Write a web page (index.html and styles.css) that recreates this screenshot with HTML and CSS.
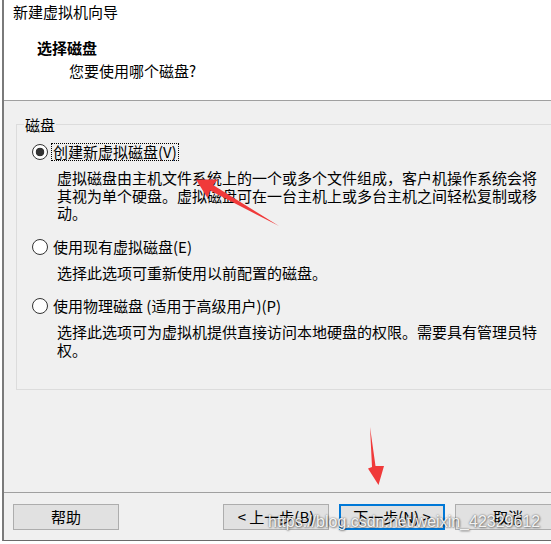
FILE: index.html
```html
<!DOCTYPE html>
<html lang="zh-CN">
<head>
    <meta charset="UTF-8">
    <title>新建虚拟机向导</title>
    <link rel="stylesheet" href="styles.css">
</head>
<body>
    <div class="window">
        <div class="header">
            <div class="caption">新建虚拟机向导</div>
            <div class="step-title">选择磁盘</div>
            <div class="step-desc">您要使用哪个磁盘?</div>
        </div>

        <div class="content">
            <fieldset class="group">
                <legend>磁盘</legend>

                <div class="option">
                    <label class="option-row">
                        <input type="radio" name="disk" checked>
                        <span class="option-label focused">创建新虚拟磁盘(V)</span>
                    </label>
                    <p class="option-desc">虚拟磁盘由主机文件系统上的一个或多个文件组成，客户机操作系统会将其视为单个硬盘。虚拟磁盘可在一台主机上或多台主机之间轻松复制或移动。</p>
                </div>

                <div class="option">
                    <label class="option-row">
                        <input type="radio" name="disk">
                        <span class="option-label">使用现有虚拟磁盘(E)</span>
                    </label>
                    <p class="option-desc">选择此选项可重新使用以前配置的磁盘。</p>
                </div>

                <div class="option">
                    <label class="option-row">
                        <input type="radio" name="disk">
                        <span class="option-label">使用物理磁盘 (适用于高级用户)(P)</span>
                    </label>
                    <p class="option-desc">选择此选项可为虚拟机提供直接访问本地硬盘的权限。需要具有管理员特权。</p>
                </div>
            </fieldset>
        </div>

        <div class="footer">
            <button class="btn">帮助</button>
            <div class="nav">
                <button class="btn">&lt; 上一步(B)</button>
                <button class="btn default">下一步(N) &gt;</button>
                <button class="btn">取消</button>
            </div>
        </div>
    </div>

    <!-- red annotation arrows -->
    <svg class="marks" width="551" height="544" viewBox="0 0 551 544">
        <polygon points="279,226 213,185 218,179.5 196,179.5 207.5,198 210,190.5" fill="#f03a3a"/>
        <polygon points="370,427 375.5,466 384,466 378.5,485 368,468.5 372,467" fill="#f03a3a"/>
    </svg>

    <div class="watermark">https://blog.csdn.net/weixin_42329612</div>
</body>
</html>
```

FILE: styles.css
```css
body {
    margin: 0;
    width: 551px;
    height: 544px;
    overflow: hidden;
    background-color: #fff;
    font-family: "Noto Sans CJK SC", sans-serif;
    font-size: 15px;
    color: #000;
    position: relative;
}

.window {
    margin-left: 2px;
    width: 566px;
    border-left: 2px solid #7a7a7a;
    border-bottom: 1px solid #6a6a6a;
    background-color: #f0f0f0;
}

/* Cabecera blanca */
.header {
    height: 101px;
    box-sizing: border-box;
    padding: 2px 0 0 9px;
    background-color: #fff;
    border-bottom: 1px solid #a0a0a0;
    line-height: 20px;
}

.step-title {
    margin: 16px 0 0 24px;
    font-weight: bold;
}

.step-desc {
    margin: 3px 0 0 56px;
}

.content {
    height: 391px;
    padding-top: 13.5px;
    box-sizing: border-box;
}

.group {
    margin: 0 12px;
    padding: 7.5px 15px 31px;
    border: 1px solid #dcdcdc;
}

.group legend {
    margin-left: -8px;
    padding: 0 1px;
    line-height: 20px;
}

.option + .option {
    margin-top: 15px;
}

.option-row {
    display: flex;
    align-items: center;
    height: 20px;
}

.option-row input {
    appearance: none;
    width: 16px;
    height: 16px;
    margin: 0 3px 0 0;
    border: 1px solid #333;
    border-radius: 50%;
    background-color: #fff;
}

.option-row input:checked {
    background: radial-gradient(circle, #333 0 4px, #fff 4.6px);
}

.option-label {
    border: 1px dotted transparent;
    padding: 0 1px;
    line-height: 16px;
}

.option-label.focused {
    border-color: #000;
}

.option-desc {
    margin: 7px 0 0 25px;
    width: 488px;
    line-height: 17.5px;
}

/* Botones */
.footer {
    display: flex;
    height: 48px;
    box-sizing: border-box;
    padding: 11px 9px 0;
    border-top: 1px solid #a0a0a0;
}

.nav {
    display: flex;
    gap: 10px;
    margin-left: auto;
}

.btn {
    width: 106px;
    height: 26px;
    padding: 0;
    border: 1px solid #adadad;
    background-color: #e1e1e1;
    font-family: inherit;
    font-size: 15px;
    line-height: 24px;
    color: #000;
}

.btn.default {
    border: 2px solid #0078d7;
    line-height: 22px;
}

.marks {
    position: absolute;
    top: 0;
    left: 0;
    pointer-events: none;
}

.watermark {
    position: absolute;
    left: 268px;
    top: 513px;
    font-family: "Liberation Sans", Arial, sans-serif;
    font-size: 16px;
    line-height: 18px;
    color: rgba(255, 255, 255, 0.92);
    text-shadow: 0 0 2px rgba(0, 0, 0, 0.6), 1px 1px 2px rgba(0, 0, 0, 0.35);
    white-space: nowrap;
}
```
